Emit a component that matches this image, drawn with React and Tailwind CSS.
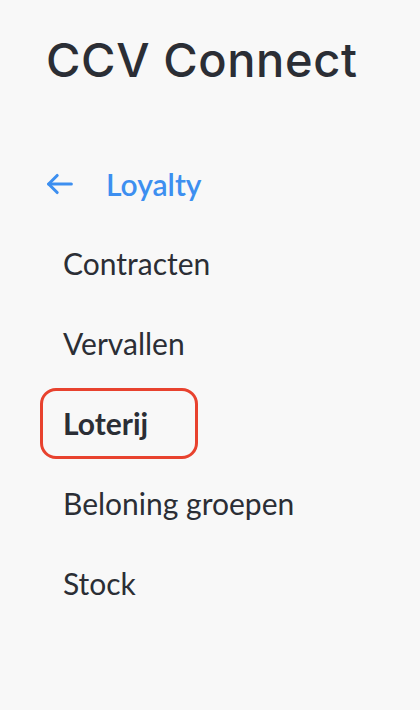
import React from 'react';

const items = ['Contracten', 'Vervallen', 'Loterij', 'Beloning groepen', 'Stock'];

const App = () => {
  return (
    <div className="w-[420px] h-[710px] bg-[#f8f8f8] overflow-hidden" style={{ fontFamily: 'Lato, sans-serif' }}>
      {/* Title */}
      <h1
        className="pl-[46px] pt-[32px] text-[47px] leading-[56px] font-medium text-[#2b2e35] tracking-[0.6px]"
        style={{ fontFamily: 'Inter, sans-serif' }}
      >
        CCV Connect
      </h1>

      {/* Back link */}
      <div className="mt-[76px] flex items-center pl-[43px] h-[40px] text-[#3d8ff0]">
        <svg className="w-[34px] h-[34px]" viewBox="0 0 24 24" fill="none" stroke="currentColor" strokeWidth={2.2} strokeLinecap="round" strokeLinejoin="round">
          <path d="M20 12H4" />
          <path d="M10 6l-6 6 6 6" />
        </svg>
        <span className="ml-[29px] text-[30px] font-semibold">Loyalty</span>
      </div>

      {/* Menu */}
      <div className="mt-[24px] flex flex-col gap-[9px] pl-[40px]">
        {items.map((item) => (
          <div
            key={item}
            className={`h-[71px] flex items-center px-[20px] self-start rounded-[16px] border-[3px] text-[30px] text-[#2b2e35] ${
              item === 'Loterij' ? 'border-[#e8422e] font-bold w-[158px]' : 'border-transparent'
            }`}
          >
            {item}
          </div>
        ))}
      </div>
    </div>
  );
};

export default App;
